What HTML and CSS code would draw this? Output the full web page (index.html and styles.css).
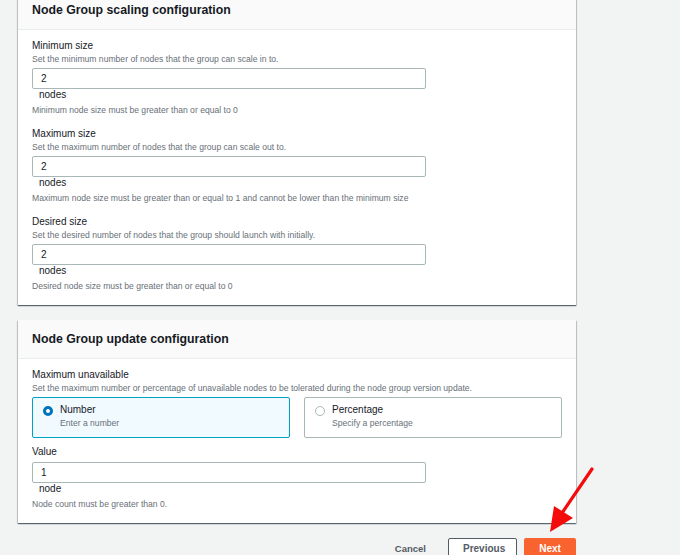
FILE: index.html
```html
<!DOCTYPE html>
<html>
<head>
<meta charset="utf-8">
<link rel="stylesheet" href="styles.css">
</head>
<body>
<div class="page">
  <section class="card">
    <header class="card-head"><h2>Node Group scaling configuration</h2></header>
    <div class="card-body">
      <div class="field">
        <div class="label">Minimum size</div>
        <div class="desc">Set the minimum number of nodes that the group can scale in to.</div>
        <div class="input">2</div>
        <div class="unit">nodes</div>
        <div class="constraint">Minimum node size must be greater than or equal to 0</div>
      </div>
      <div class="field">
        <div class="label">Maximum size</div>
        <div class="desc">Set the maximum number of nodes that the group can scale out to.</div>
        <div class="input">2</div>
        <div class="unit">nodes</div>
        <div class="constraint">Maximum node size must be greater than or equal to 1 and cannot be lower than the minimum size</div>
      </div>
      <div class="field">
        <div class="label">Desired size</div>
        <div class="desc">Set the desired number of nodes that the group should launch with initially.</div>
        <div class="input">2</div>
        <div class="unit">nodes</div>
        <div class="constraint">Desired node size must be greater than or equal to 0</div>
      </div>
    </div>
  </section>

  <section class="card">
    <header class="card-head"><h2>Node Group update configuration</h2></header>
    <div class="card-body">
      <div class="field">
        <div class="label">Maximum unavailable</div>
        <div class="desc">Set the maximum number or percentage of unavailable nodes to be tolerated during the node group version update.</div>
        <div class="tiles">
          <div class="tile selected">
            <span class="radio on"></span>
            <div class="tile-text">
              <div class="tile-title">Number</div>
              <div class="tile-desc">Enter a number</div>
            </div>
          </div>
          <div class="tile">
            <span class="radio"></span>
            <div class="tile-text">
              <div class="tile-title">Percentage</div>
              <div class="tile-desc">Specify a percentage</div>
            </div>
          </div>
        </div>
      </div>
      <div class="field value-field">
        <div class="label">Value</div>
        <div class="input">1</div>
        <div class="unit">node</div>
        <div class="constraint">Node count must be greater than 0.</div>
      </div>
    </div>
  </section>

  <div class="actions">
    <button class="btn link">Cancel</button>
    <button class="btn normal">Previous</button>
    <button class="btn primary">Next</button>
  </div>

  <svg class="arrow" width="680" height="555" viewBox="0 0 680 555">
    <line x1="592" y1="469" x2="562" y2="513" stroke="#f40c0c" stroke-width="3.2" stroke-linecap="round"/>
    <polygon points="550,532 554,506 573,518" fill="#f40c0c"/>
  </svg>
</div>
</body>
</html>
```

FILE: styles.css
```css
* { box-sizing: border-box; }
html, body {
  margin: 0;
  padding: 0;
  background: #f2f3f3;
  height: 555px;
  overflow: hidden;
}
body {
  font-family: "Liberation Sans", Arial, sans-serif;
  color: #16191f;
}
.page {
  position: relative;
  width: 680px;
  margin-top: -9px;
  padding-left: 18px;
}
.card {
  width: 558px;
  background: #fff;
  box-shadow: 0 1px 1px 0 rgba(0, 28, 36, 0.5), 1px 1px 1px 0 rgba(0, 28, 36, 0.15), -1px 1px 1px 0 rgba(0, 28, 36, 0.15);
  margin-bottom: 15px;
}
.card-head {
  height: 39px;
  background: #fafafa;
  border-bottom: 1px solid #eaeded;
  padding: 0 14px;
  display: flex;
  align-items: center;
}
.card-head h2 {
  margin: 0;
  font-size: 12.3px;
  font-weight: bold;
  color: #16191f;
}
.card-body {
  padding: 9px 14px 13px;
}
.field + .field { margin-top: 11px; }
.value-field { margin-top: 7px !important; }
.label {
  font-size: 10px;
  line-height: 14px;
  color: #16191f;
}
.desc, .constraint, .tile-desc {
  font-size: 8.6px;
  line-height: 12px;
  color: #687078;
}
.input {
  margin-top: 3px;
  width: 394px;
  height: 21px;
  border: 1px solid #aab7b8;
  border-radius: 2px;
  padding: 0 8px;
  font-size: 10px;
  line-height: 19px;
  color: #16191f;
}
.unit {
  margin-left: 7px;
  font-size: 10px;
  line-height: 11px;
  color: #16191f;
}
.constraint { margin-top: 4px; }
.tiles {
  margin-top: 3px;
  display: grid;
  grid-template-columns: 1fr 1fr;
  gap: 14px;
}
.tile {
  height: 41px;
  border: 1px solid #aab7b8;
  border-radius: 2px;
  padding: 5px 10px 0;
  display: flex;
  align-items: flex-start;
  gap: 7px;
}
.tile.selected {
  border-color: #00a1c9;
  background: #f1faff;
}
.radio {
  flex: none;
  width: 10px;
  height: 10px;
  margin-top: 3px;
  border-radius: 50%;
  border: 1px solid #aab7b8;
  background: #fff;
}
.radio.on {
  border: 3px solid #0073bb;
}
.tile-title {
  font-size: 10px;
  line-height: 14px;
  color: #16191f;
}
.actions {
  width: 558px;
  display: flex;
  justify-content: flex-end;
  gap: 7px;
}
.btn {
  font-family: "Liberation Sans", Arial, sans-serif;
  font-weight: bold;
  font-size: 10px;
  height: 20px;
  padding: 0 14px;
  border-radius: 2px;
  border: 1px solid transparent;
  background: transparent;
}
.btn.link { color: #545b64; font-size: 9.5px; }
.btn.normal {
  background: #fff;
  border-color: #545b64;
  color: #545b64;
  width: 69px;
}
.btn.primary {
  background: #f8632f;
  color: #fff;
  width: 52px;
}
.arrow {
  position: absolute;
  left: 0;
  top: 9px;
}
```
